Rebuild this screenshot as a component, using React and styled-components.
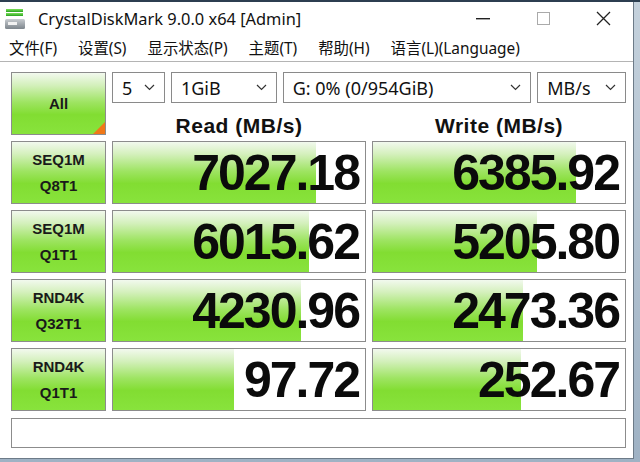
import React from "react";
import styled, { createGlobalStyle } from "styled-components";

const Global = createGlobalStyle`
  html, body { margin: 0; padding: 0; }
  body {
    width: 640px; height: 462px; overflow: hidden;
    background: linear-gradient(180deg, #2c3e50 0px, #2c3e50 2px, #c4d1dc 2px, #9fb2c4 100%);
    font-family: "Noto Sans", "Noto Sans CJK SC", sans-serif;
  }
`;

const Window = styled.div`
  margin-top: 2px;
  width: 634px;
  height: 457px;
  background: #ffffff;
  border-right: 1px solid #6d7b88;
  border-bottom: 1px solid #6d7b88;
  box-sizing: border-box;
  display: flex;
  flex-direction: column;
`;

const TitleBar = styled.div`
  height: 33px;
  display: flex;
  align-items: center;
  padding-left: 5px;
  flex: none;
`;

const Title = styled.div`
  margin-left: 13px;
  font-size: 16.4px;
  color: #111;
  flex: 1;
  padding-bottom: 1px;
`;

const WinButtons = styled.div`
  display: flex;
  align-items: center;
  height: 100%;
`;

const WinBtn = styled.div`
  width: 60px;
  height: 100%;
  display: flex;
  align-items: center;
  justify-content: center;
`;

const MenuBar = styled.div`
  height: 27px;
  display: flex;
  align-items: center;
  gap: 21px;
  padding-left: 9px;
  padding-bottom: 2px;
  box-sizing: border-box;
  border-bottom: 1px solid #b4b4b4;
  font-size: 15.4px;
  color: #111;
  flex: none;
`;

const MenuItem = styled.span`
  white-space: nowrap;
`;

const Content = styled.div`
  padding: 10px 8px 0 11px;
  display: grid;
  grid-template-columns: 95px 254px 254px;
  grid-template-rows: repeat(5, 63px) 31px;
  column-gap: 6px;
  row-gap: 6px;
`;

const greenGrad = `linear-gradient(180deg, #f2f9ee 0%, #d4f0bc 20%, #9ee462 48%, #82dd32 68%, #88e33c 100%)`;

const LabelBtn = styled.div`
  position: relative;
  box-sizing: border-box;
  border: 1px solid #8c8c8c;
  background: ${greenGrad};
  display: flex;
  flex-direction: column;
  align-items: center;
  justify-content: center;
  font-family: "Liberation Sans", "Noto Sans", sans-serif;
  font-weight: bold;
  font-size: 15px;
  line-height: 26px;
  color: #1a1a1a;
  overflow: hidden;
`;

const Corner = styled.div`
  position: absolute;
  right: 0;
  bottom: 0;
  width: 0;
  height: 0;
  border-style: solid;
  border-width: 0 0 12px 12px;
  border-color: transparent transparent #f07818 transparent;
`;

const TopArea = styled.div`
  grid-column: 2 / 4;
  display: flex;
  flex-direction: column;
`;

const Selects = styled.div`
  display: flex;
  gap: 6px;
  height: 31px;
  flex: none;
`;

const Select = styled.div`
  box-sizing: border-box;
  width: ${(p) => p.$w}px;
  height: 31px;
  border: 1px solid #8a8a8a;
  background: #fff;
  display: flex;
  align-items: center;
  justify-content: space-between;
  padding: 0 9px 0 9px;
  font-size: 18px;
  color: #111;
  white-space: nowrap;
`;

const Headers = styled.div`
  display: grid;
  grid-template-columns: 254px 254px;
  column-gap: 6px;
  padding-top: 12px;
`;

const Header = styled.div`
  text-align: center;
  font-family: "Liberation Sans", "Noto Sans", sans-serif;
  font-weight: bold;
  font-size: 21px;
  letter-spacing: 0.5px;
  line-height: 22px;
  color: #111;
`;

const Meter = styled.div`
  position: relative;
  box-sizing: border-box;
  border: 1px solid #8c8c8c;
  background: #fff;
  display: flex;
  align-items: center;
  justify-content: flex-end;
  padding-right: 6px;
  overflow: hidden;
`;

const Fill = styled.div`
  position: absolute;
  left: 0;
  top: 0;
  bottom: 0;
  background: ${greenGrad};
`;

const Value = styled.span`
  position: relative;
  font-family: "Liberation Sans", sans-serif;
  font-weight: bold;
  font-size: 50px;
  letter-spacing: -2px;
  color: #0b0b0b;
  line-height: 1;
`;

const Status = styled.div`
  grid-column: 1 / 4;
  box-sizing: border-box;
  margin-top: 1px;
  border: 1px solid #8c8c8c;
  background: #fff;
`;

const Chevron = () => (
  <svg width="11" height="7" viewBox="0 0 11 7">
    <path d="M1 1 L5.5 5.5 L10 1" fill="none" stroke="#333" strokeWidth="1.2" />
  </svg>
);

const AppIcon = () => (
  <svg width="20" height="22" viewBox="0 0 20 22">
    <defs>
      <linearGradient id="g1" x1="0" y1="0" x2="0" y2="1">
        <stop offset="0" stopColor="#7de05a" />
        <stop offset="1" stopColor="#27a21e" />
      </linearGradient>
      <linearGradient id="g2" x1="0" y1="0" x2="0" y2="1">
        <stop offset="0" stopColor="#c8ccd0" />
        <stop offset="1" stopColor="#7d858c" />
      </linearGradient>
    </defs>
    <rect x="1" y="1" width="17" height="3" fill="url(#g1)" />
    <rect x="1" y="5" width="17" height="3" fill="url(#g1)" />
    <rect x="0" y="11" width="20" height="10" rx="1.5" fill="url(#g2)" />
    <rect x="3" y="14" width="9" height="3" fill="#f2f2f2" />
  </svg>
);

const rows = [
  { l1: "SEQ1M", l2: "Q8T1", r: "7027.18", rw: 203, w: "6385.92", ww: 203 },
  { l1: "SEQ1M", l2: "Q1T1", r: "6015.62", rw: 196, w: "5205.80", ww: 164 },
  { l1: "RND4K", l2: "Q32T1", r: "4230.96", rw: 188, w: "2473.36", ww: 150 },
  { l1: "RND4K", l2: "Q1T1", r: "97.72", rw: 121, w: "252.67", ww: 148 },
];

export default function App() {
  return (
    <>
      <Global />
      <Window>
        <TitleBar>
          <AppIcon />
          <Title>CrystalDiskMark 9.0.0 x64 [Admin]</Title>
          <WinButtons>
            <WinBtn>
              <svg width="14" height="2" viewBox="0 0 14 2">
                <rect width="14" height="1.4" fill="#222" />
              </svg>
            </WinBtn>
            <WinBtn>
              <svg width="13" height="13" viewBox="0 0 13 13">
                <rect x="0.5" y="0.5" width="12" height="12" fill="none" stroke="#aaa" strokeWidth="1" />
              </svg>
            </WinBtn>
            <WinBtn>
              <svg width="15" height="15" viewBox="0 0 15 15">
                <path d="M1 1 L14 14 M14 1 L1 14" stroke="#222" strokeWidth="1.3" />
              </svg>
            </WinBtn>
          </WinButtons>
        </TitleBar>
        <MenuBar>
          <MenuItem>文件(F)</MenuItem>
          <MenuItem>设置(S)</MenuItem>
          <MenuItem>显示状态(P)</MenuItem>
          <MenuItem>主题(T)</MenuItem>
          <MenuItem>帮助(H)</MenuItem>
          <MenuItem>语言(L)(Language)</MenuItem>
        </MenuBar>
        <Content>
          <LabelBtn>
            All
            <Corner />
          </LabelBtn>
          <TopArea>
            <Selects>
              <Select $w={53}>
                5 <Chevron />
              </Select>
              <Select $w={106}>
                1GiB <Chevron />
              </Select>
              <Select $w={249}>
                G: 0% (0/954GiB) <Chevron />
              </Select>
              <Select $w={89}>
                MB/s <Chevron />
              </Select>
            </Selects>
            <Headers>
              <Header>Read (MB/s)</Header>
              <Header>Write (MB/s)</Header>
            </Headers>
          </TopArea>
          {rows.map((r, i) => (
            <React.Fragment key={i}>
              <LabelBtn>
                <span>{r.l1}</span>
                <span>{r.l2}</span>
              </LabelBtn>
              <Meter>
                <Fill style={{ width: r.rw }} />
                <Value>{r.r}</Value>
              </Meter>
              <Meter>
                <Fill style={{ width: r.ww }} />
                <Value>{r.w}</Value>
              </Meter>
            </React.Fragment>
          ))}
          <Status />
        </Content>
      </Window>
    </>
  );
}
